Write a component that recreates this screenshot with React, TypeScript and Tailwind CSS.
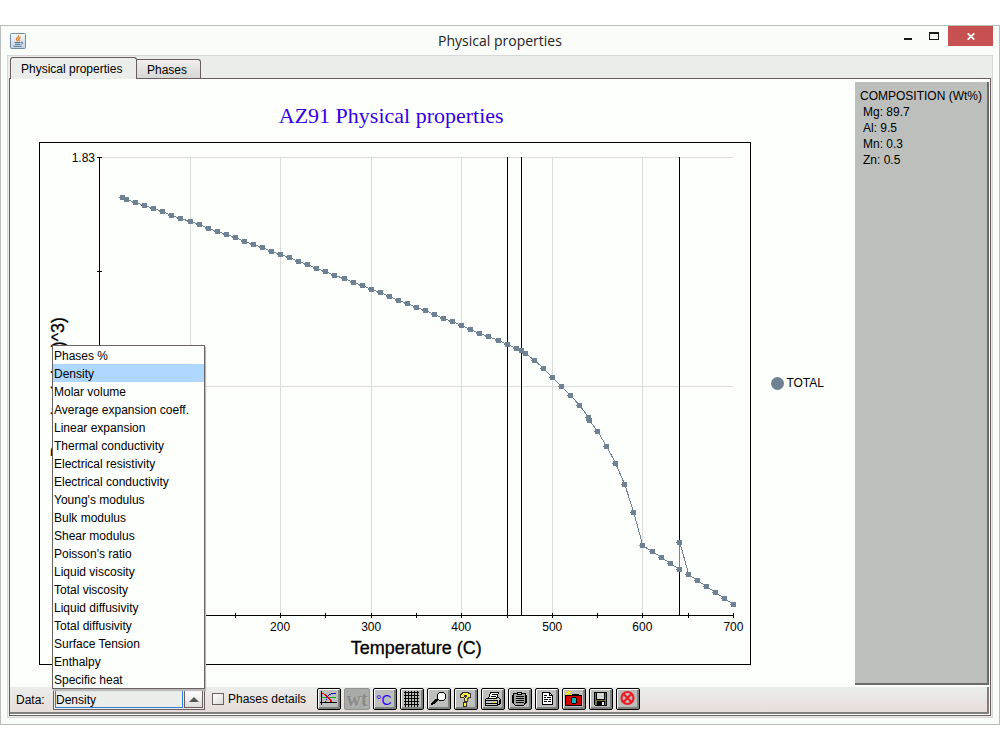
import { useState, type ReactNode } from "react";

const PROPERTIES = [
  "Phases %",
  "Density",
  "Molar volume",
  "Average expansion coeff.",
  "Linear expansion",
  "Thermal conductivity",
  "Electrical resistivity",
  "Electrical conductivity",
  "Young's modulus",
  "Bulk modulus",
  "Shear modulus",
  "Poisson's ratio",
  "Liquid viscosity",
  "Total viscosity",
  "Liquid diffusivity",
  "Total diffusivity",
  "Surface Tension",
  "Enthalpy",
  "Specific heat",
];

const COMPOSITION = [
  ["Mg", "89.7"],
  ["Al", "9.5"],
  ["Mn", "0.3"],
  ["Zn", "0.5"],
];

// Plot-space samples: [temperature in C, vertical position inside the frame].
const range = (from: number, ys: number[]): [number, number][] =>
  ys.map((y, i) => [from + i * 10, y]);

const SAMPLES: [number, number][] = [
  [25, 55],
  ...range(30, [
    57, 60, 63, 66, 69, 73, 76, 79, 82, 86, 89, 92, 95, 99, 102, 105, 109, 112,
    115, 119, 122, 126, 129, 133, 136, 140, 143, 147, 150, 154, 158, 161, 165,
    168, 172, 176, 179, 183, 187, 191, 194, 198, 202, 206,
  ]),
  [466, 208],
  ...range(470, [211, 218, 226, 235, 244, 253, 263, 275]),
  [541, 278],
  ...range(550, [289, 304, 321, 342, 370, 403, 409, 415, 421, 427]),
  [640, 400],
  ...range(650, [432, 438, 444, 450, 456, 462]),
];

const toX = (t: number) => Math.floor(60.42 + t * 0.9059);

function Chart() {
  const line = SAMPLES.map(([t, y]) => `${toX(t) + 0.5},${y + 0.5}`).join(" ");
  return (
    <svg
      viewBox="0 0 712 523"
      className="block h-auto w-full"
      role="img"
      aria-label="Density against temperature"
      fontFamily="'Liberation Sans', Arial, sans-serif"
    >
      <g shapeRendering="crispEdges" fill="none" stroke="#000">
        <rect x="0.5" y="0.5" width="711" height="522" />
        <g stroke="#d9dbd8">
          {[100, 200, 300, 400, 500, 600].map((t) => (
            <path key={t} d={`M${toX(t) + 0.5} 15V473`} />
          ))}
          <path d="M61 15.5H694M61 244.5H694" />
        </g>
        <path d="M60.5 15V474M60 473.5H695" />
        {[15, 129, 244, 358].map((y) => (
          <path key={y} d={`M58 ${y + 0.5}H63`} />
        ))}
        {[50, 100, 150, 200, 250, 300, 350, 400, 450, 500, 550, 600, 650, 700].map((t) => (
          <path key={t} d={`M${toX(t) + 0.5} 471V476`} />
        ))}
        <path d="M468.5 15V473M482.5 15V473M640.5 15V473" />
        <polyline points={line} stroke="#6f8293" />
      </g>
      <g fill="#6f8293" shapeRendering="crispEdges">
        {SAMPLES.map(([t, y], i) => (
          <path key={i} d={`M${toX(t) - 2} ${y - 2}h5v5h-5zM${toX(t) - 3} ${y}h1v1h-1z`} />
        ))}
      </g>
      <g fontSize="12" textAnchor="middle">
        {[100, 200, 300, 400, 500, 600, 700].map((t) => (
          <text key={t} x={toX(t)} y="489">
            {t}
          </text>
        ))}
        <text x="56" y="20" textAnchor="end">
          1.83
        </text>
      </g>
      <g fontSize="18" textAnchor="middle" stroke="#000" strokeWidth="0.3">
        <text x="377" y="512">
          Temperature (C)
        </text>
        <text transform="translate(25 245) rotate(-90)">Density (g/cm)^3)</text>
      </g>
    </svg>
  );
}

function ToolButton({
  label,
  disabled,
  children,
}: {
  label: string;
  disabled?: boolean;
  children: ReactNode;
}) {
  if (disabled) {
    return (
      <button
        type="button"
        aria-label={label}
        disabled
        className="flex h-[22px] w-[26px] shrink-0 items-center justify-center rounded-[2px] border border-[#919391] bg-[#a9aba9]"
      >
        {children}
      </button>
    );
  }
  return (
    <button
      type="button"
      aria-label={label}
      className="h-[22px] w-6 shrink-0 rounded-[2px] border border-black bg-[#bdbfbd] shadow-[inset_1px_1px_0_#fff,inset_-2px_-2px_0_#7f817f]"
    >
      <svg
        viewBox="1 1 22 20"
        className="block h-5 w-[22px]"
        shapeRendering="crispEdges"
        fill="none"
        stroke="#000"
        aria-hidden="true"
      >
        {children}
      </svg>
    </button>
  );
}

function JavaIcon() {
  return (
    <svg viewBox="0 0 16 16" className="size-4 shrink-0" fill="none" aria-hidden="true">
      <defs>
        <linearGradient id="java-bg" x1="0" y1="0" x2="0" y2="1">
          <stop offset="0" stopColor="#f8fafc" />
          <stop offset="1" stopColor="#c3d3e0" />
        </linearGradient>
      </defs>
      <rect x="0.5" y="0.5" width="15" height="15" rx="1" fill="url(#java-bg)" stroke="#6f8ba6" />
      <path d="M8.5 2.2C9.5 4 6.3 4.8 6.6 6.4 6.8 7.3 7.6 7.6 7.8 8.4M10.6 4.4C8.7 5.2 8.3 6 9 6.8 9.4 7.4 9 8 8.7 8.3" stroke="#e8832a" strokeWidth="1.4" />
      <path d="M4.5 9.5H10.5M5 11.3H10M3.5 13.3H11.5M11 9.2C13.4 8.6 13.4 10.8 10.8 11.4" stroke="#4c7391" />
    </svg>
  );
}

export default function App() {
  const [property, setProperty] = useState("Density");
  const [open, setOpen] = useState(true);

  return (
    <div className="bg-white pt-[25px] font-['Liberation_Sans',Arial,sans-serif] text-xs text-black">
      <main className="border border-[#bbbdbb] bg-[#fafcfa]">
        <header className="grid h-[29px] grid-cols-[1fr_auto_1fr] items-center">
          <div className="pl-[9px]">
            <JavaIcon />
          </div>
          <span className="font-['Open_Sans','Noto_Sans',sans-serif] text-sm text-[#222]">
            Physical properties
          </span>
          <div className="flex justify-end self-start pr-[6px]">
            <button type="button" aria-label="Minimize" className="flex h-5 w-6 items-center justify-center">
              <svg viewBox="0 0 10 10" className="size-[10px]" aria-hidden="true">
                <path d="M1 7H9V9H1Z" fill="#1a1a1a" />
              </svg>
            </button>
            <button type="button" aria-label="Maximize" className="flex h-5 w-7 items-center justify-center">
              <svg viewBox="0 0 10 10" className="size-[10px]" shapeRendering="crispEdges" aria-hidden="true">
                <path d="M0 1H10V9H0ZM1 3V8H9V3Z" fill="#1a1a1a" fillRule="evenodd" />
              </svg>
            </button>
            <button type="button" aria-label="Close" className="flex h-5 w-[45px] items-center justify-center bg-[#c75050]">
              <svg viewBox="0 0 8 7" className="h-[7px] w-2" aria-hidden="true">
                <path d="M0.7 0.3L7.3 6.7M7.3 0.3L0.7 6.7" stroke="#fff" strokeWidth="1.7" />
              </svg>
            </button>
          </div>
        </header>

        <div className="mx-[6px] mb-[6px] border border-[#d6d8d6] bg-[#ebedeb] px-px pb-px pt-px">
          <div role="tablist" className="flex items-end pl-px">
            <button
              type="button"
              role="tab"
              aria-selected="true"
              className="relative -mb-px h-[22px] w-[127px] rounded-t-[3px] border border-b-0 border-[#6b5d5d] bg-[#ebedeb] px-[10px] text-left"
            >
              Physical properties
            </button>
            <button
              type="button"
              role="tab"
              aria-selected="false"
              className="-ml-px h-[19px] w-[65px] rounded-tr-[3px] border border-b-0 border-[#6b5d5d] bg-linear-to-b from-[#f3eeee] to-[#d6d8d6] px-[10px] pt-px text-left"
            >
              Phases
            </button>
          </div>

          <div className="border border-[#6b5d5d] bg-[#fdfffd] pb-px pr-px">
            <div className="flex">
              <section className="min-w-0 flex-1 pb-[22px] pl-[29px] pr-[31px] pt-[22px]">
                <div className="flex items-center">
                  <div className="min-w-0 flex-1">
                    <h1 className="mb-[11px] pr-2 text-center font-['Liberation_Serif','Times_New_Roman',serif] text-[22px] leading-[30px] text-[#3300e6]">
                      AZ91 Physical properties
                    </h1>
                    <Chart />
                  </div>
                  <div className="flex items-center gap-[2px] pl-5">
                    <span className="size-[13px] rounded-full bg-[#6f8293]" />
                    TOTAL
                  </div>
                </div>
              </section>
              <aside className="mb-[2px] mt-[3px] w-[134px] border-b-2 border-r-2 border-[#6b6d6b] bg-[#bdbfbc] pl-[5px] pt-[6px] leading-4">
                <h2 className="whitespace-nowrap">COMPOSITION (Wt%)</h2>
                <ul className="pl-[3px]">
                  {COMPOSITION.map(([element, amount]) => (
                    <li key={element}>
                      {element}: {amount}
                    </li>
                  ))}
                </ul>
              </aside>
            </div>

            <div className="flex h-[27px] items-start border-b-2 border-r-2 border-[#7d7f7d] bg-linear-to-b from-[#ebedeb] to-[#e6dedb] pl-[6px] pt-px">
              <label htmlFor="property" className="w-[37px] leading-6">
                Data:
              </label>
              <div className="relative flex h-[22px] w-[152px] border border-[#6b5d5d] bg-[#ebedeb] p-px">
                <select
                  id="property"
                  value={property}
                  onChange={(e) => setProperty(e.target.value)}
                  className="min-w-0 flex-1 appearance-none border border-[#2f7fd6] bg-[#ebedeb] pt-px leading-4 outline-none"
                >
                  {PROPERTIES.map((p) => (
                    <option key={p}>{p}</option>
                  ))}
                </select>
                <button
                  type="button"
                  aria-label="Show list"
                  aria-expanded={open}
                  onClick={() => setOpen(!open)}
                  className="ml-px flex w-[19px] items-center justify-center border border-[#6b5d5d] bg-linear-to-b from-white to-[#dcdedc]"
                >
                  <svg viewBox="0 0 10 5" className="h-[5px] w-[10px]" aria-hidden="true">
                    <path d="M5 0L10 5H0Z" fill="#555" />
                  </svg>
                </button>
                {open && (
                  <ul
                    role="listbox"
                    aria-label="Data"
                    className="absolute bottom-5 -left-[2px] w-[153px] border border-[#6b6361] bg-[#fdfffd] shadow-[1px_2px_1px_#bbb]"
                  >
                    {PROPERTIES.map((p) => (
                      <li
                        key={p}
                        role="option"
                        aria-selected={p === property}
                        onClick={() => {
                          setProperty(p);
                          setOpen(false);
                        }}
                        className="h-[18px] whitespace-nowrap pl-px leading-5 aria-selected:bg-[#aed8ff]"
                      >
                        {p}
                      </li>
                    ))}
                  </ul>
                )}
              </div>
              <label className="ml-[7px] flex h-[22px] w-[105px] shrink-0 items-center gap-1 whitespace-nowrap leading-6">
                <input
                  type="checkbox"
                  className="size-3 appearance-none border border-[#6b6361] bg-linear-to-br from-white to-[#dedcda] checked:bg-[#6b6361]"
                />
                Phases details
              </label>
              <div className="flex gap-[3px]">
                <ToolButton label="Plot">
                  <path d="M5 9H19V10H5Z" fill="#00b020" stroke="none" />
                  <path d="M8 13.5H9M9 11.5H10M9 9.5H11M10.5 8V9M11 7.5H12M12 6.5H14M14 5.5H19" stroke="#0000e0" />
                  <path d="M5 5.5H7M7 6.5H9M8 7.5H10M9 8.5H11M10 9.5H12M11 10.5H13M12 11.5H14M13 12.5H15M13 13.5H15" stroke="#e80000" />
                  <path d="M4.5 3V17M3 14.5H20" />
                </ToolButton>
                <ToolButton label="Weight percent" disabled>
                  <span className="font-['Liberation_Serif',serif] text-xl font-bold leading-5 text-[#8a8c8a] [text-shadow:1px_1px_0_#b8bab8]">
                    wt
                  </span>
                </ToolButton>
                <ToolButton label="Celsius">
                  <text x="3" y="17" fontSize="14" fill="#2a00ff" stroke="none">
                    °C
                  </text>
                </ToolButton>
                <ToolButton label="Grid">
                  <path d="M5.5 3V19M8.5 3V19M11.5 3V19M14.5 3V19M17.5 3V19M4 4.5H19M4 7.5H19M4 10.5H19M4 13.5H19M4 16.5H19" />
                </ToolButton>
                <ToolButton label="Zoom">
                  <path d="M11 11L4.5 16.5" strokeWidth="2.5" />
                  <path d="M12 4H17V5H18V6H19V11H18V12H17V13H12V12H11V11H10V6H11V5H12Z" fill="#000" stroke="none" />
                  <path d="M12 5H17V6H18V11H17V12H12V11H11V6H12Z" fill="#fff" stroke="none" />
                </ToolButton>
                <ToolButton label="Help">
                  <path d="M8 4H15V5H17V10H15V11H14V14H13V19H9V14H10V10H11V9H10V10H6V6H7V5H8Z" fill="#333" stroke="none" />
                  <path d="M9 5H14V6H16V9H14V10H13V13H11V10H12V9H13V7H10V9H7V7H8V6H9ZM10 15H12V18H10Z" fill="#ffee33" stroke="none" />
                </ToolButton>
                <ToolButton label="Print">
                  <path d="M4.5 11.5L7.5 9.5H17.5L19.5 11.5V15.5L16.5 17.5H4.5Z" fill="#c8cac8" />
                  <path d="M7.5 10.5L9.5 4.5H17.5L15.5 10.5Z" fill="#fff" />
                  <path d="M11 6.5H16M10 8.5H15M4 12.5H16M16.5 12V18M5 15.5H16M18.5 12V16" />
                  <path d="M12 14.5H14" stroke="#f5e000" />
                </ToolButton>
                <ToolButton label="Clipboard">
                  <path d="M5.5 5.5H17.5V15L15.5 17.5H7.5L5.5 15.5Z" fill="#a4a6a4" />
                  <path d="M4.5 7V15M18.5 7V15" />
                  <path d="M9.5 6.5V4.5H13.5V6.5Z" fill="#d5d7d5" />
                  <path d="M8 8.5H16M8 10.5H16M8 12.5H16M8 14.5H16" />
                </ToolButton>
                <ToolButton label="Document">
                  <path d="M7.5 4.5H14.5L17.5 7.5V16.5H7.5Z" fill="#fff" />
                  <path d="M14.5 4.5V7.5H17.5M9 7.5H12M9 9.5H11M12 9.5H16M9 11.5H13M14 11.5H16M9 13.5H12M13 13.5H16" />
                </ToolButton>
                <ToolButton label="Snapshot">
                  <path d="M3.5 7.5H19.5V17.5H3.5Z" fill="#d40000" />
                  <path d="M10 6.5H17" />
                  <path d="M3 3.5H4M4 4.5H5M6 3V6M9 3.5H8M8 4.5H7M3 6.5H5M8 6.5H10M5 5.5H8" stroke="#ffee00" />
                  <path d="M10 9H14V10H15V15H14V16H10V15H9V10H10Z" fill="#000" stroke="none" />
                  <path d="M10 10H14V15H10Z" fill="#00b8c0" stroke="none" />
                </ToolButton>
                <ToolButton label="Save">
                  <path d="M5.5 4.5H17.5V17.5H6.5L5.5 16.5Z" fill="#77703a" />
                  <path d="M8 5H15V11H8Z" fill="#d4d6d4" stroke="none" />
                  <path d="M8 13H16V17H8Z" fill="#000" stroke="none" />
                  <path d="M13 14H15V17H13Z" fill="#eee" stroke="none" />
                  <path d="M7.5 5V11.5H15.5V5" />
                </ToolButton>
                <ToolButton label="Close plot">
                  <g shapeRendering="auto" stroke="#ee1c25" strokeWidth="2.2">
                    <circle cx="11.5" cy="10" r="6" />
                    <path d="M7.5 6L15.5 14M15.5 6L7.5 14" />
                  </g>
                </ToolButton>
              </div>
            </div>
          </div>
        </div>
      </main>
    </div>
  );
}
